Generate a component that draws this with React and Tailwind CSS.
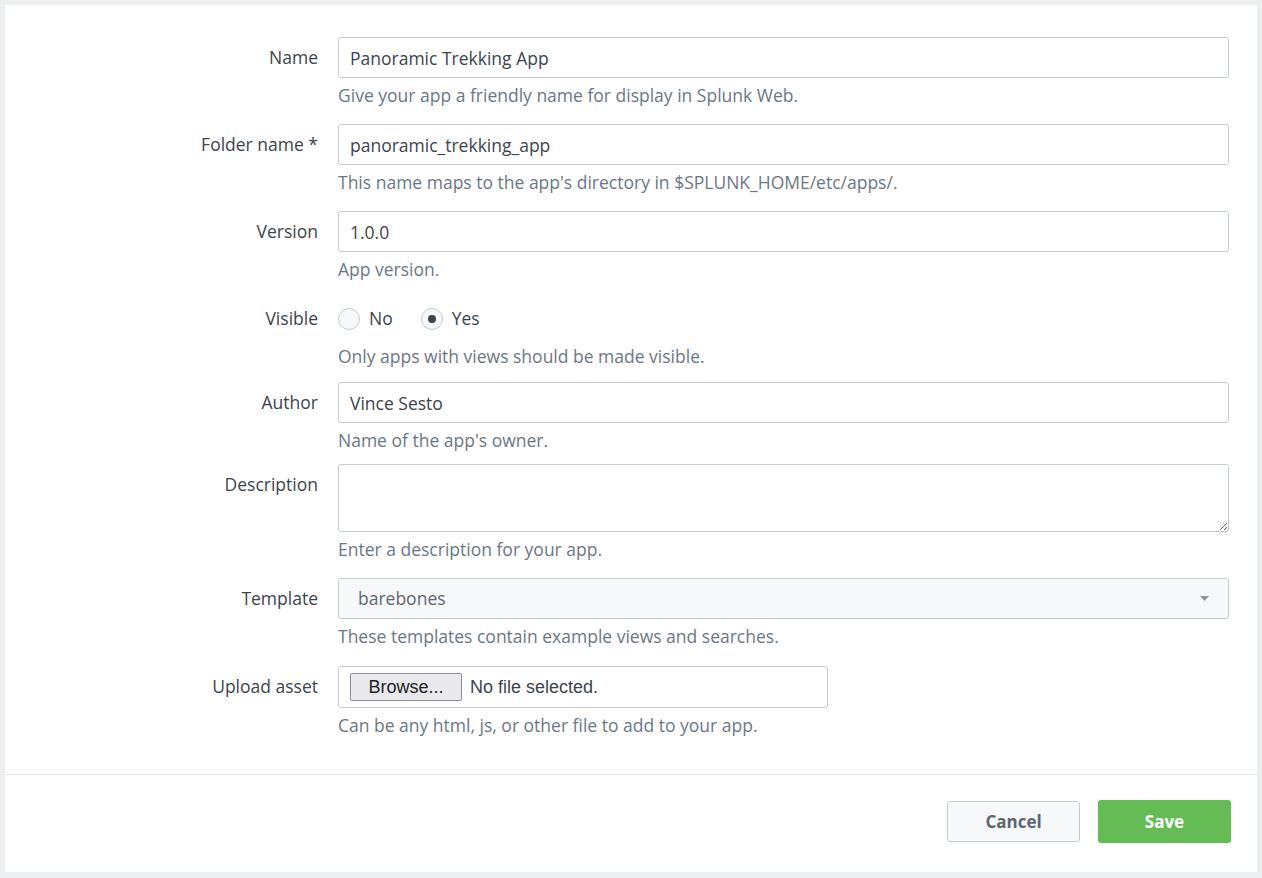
import { useState } from "react";

const inputCls =
    "w-full h-[41px] px-[11px] border border-[#c3cbd4] rounded-[3px] bg-white text-[17.5px] text-[#3c444d] outline-none";

function Row({ label, top, children, help }) {
    return (
        <div className="flex" style={{ marginTop: top }}>
            <div className="w-[333px] pr-[20px] text-right text-[17.5px] text-[#3c444d] leading-[40px] shrink-0">
                {label}
            </div>
            <div className="w-[891px]">
                {children}
                <div className="mt-[5px] leading-[24px] text-[17.5px] text-[#6b7785]">{help}</div>
            </div>
        </div>
    );
}

function Radio({ checked, label, onClick }) {
    return (
        <button type="button" onClick={onClick} className="flex items-center gap-[9px] mr-[28px]">
            <span className="w-[22px] h-[22px] rounded-full border border-[#c3cbd4] bg-[#f7f8fa] flex items-center justify-center">
                {checked && <span className="w-[8px] h-[8px] rounded-full bg-[#3c444d]" />}
            </span>
            <span className="text-[17.5px] text-[#3c444d]">{label}</span>
        </button>
    );
}

export default function App() {
    const [visible, setVisible] = useState(true);

    return (
        <div className="min-h-screen bg-[#eceef0] p-[5px] font-['Open_Sans',sans-serif]">
            <div className="bg-white h-[867px] flex flex-col">
                <div className="pt-[32px] h-[770px] border-b border-[#e1e6eb]">
                    <Row label="Name" top={0} help="Give your app a friendly name for display in Splunk Web.">
                        <input className={inputCls} defaultValue="Panoramic Trekking App" />
                    </Row>
                    <Row label="Folder name *" top={17} help="This name maps to the app's directory in $SPLUNK_HOME/etc/apps/.">
                        <input className={inputCls} defaultValue="panoramic_trekking_app" />
                    </Row>
                    <Row label="Version" top={17} help="App version.">
                        <input className={inputCls} defaultValue="1.0.0" />
                    </Row>
                    <Row label="Visible" top={17} help="Only apps with views should be made visible.">
                        <div className="h-[41px] flex items-center">
                            <Radio checked={!visible} label="No" onClick={() => setVisible(false)} />
                            <Radio checked={visible} label="Yes" onClick={() => setVisible(true)} />
                        </div>
                    </Row>
                    <Row label="Author" top={14} help="Name of the app's owner.">
                        <input className={inputCls} defaultValue="Vince Sesto" />
                    </Row>
                    <Row label="Description" top={12} help="Enter a description for your app.">
                        <textarea className="w-full h-[68px] block px-[11px] py-[8px] border border-[#c3cbd4] rounded-[3px] bg-white text-[17.5px] text-[#3c444d] outline-none" />
                    </Row>
                    <Row label="Template" top={17} help="These templates contain example views and searches.">
                        <div className="h-[41px] px-[19px] border border-[#c3cbd4] rounded-[3px] bg-[#f7f8fa] flex items-center justify-between text-[17.5px] text-[#5c6773]">
                            <span>barebones</span>
                            <svg width="9" height="6" viewBox="0 0 9 6">
                                <path d="M0 0h9L4.5 5z" fill="#8b949e" />
                            </svg>
                        </div>
                    </Row>
                    <Row label="Upload asset" top={18} help="Can be any html, js, or other file to add to your app.">
                        <div className="w-[490px] h-[42px] px-[11px] border border-[#c3cbd4] rounded-[3px] bg-white flex items-center gap-[8px] text-[18px] text-[#3c444d]">
                            <span className="h-[28px] w-[112px] flex items-center justify-center bg-[#e9e9ed] border border-[#8f8f9d] rounded-[2px] font-['Liberation_Sans',sans-serif] text-[#222]">
                                Browse...
                            </span>
                            <span className="font-['Liberation_Sans',sans-serif]">No file selected.</span>
                        </div>
                    </Row>
                </div>
                <div className="flex-1 flex items-center justify-end gap-[18px] pr-[26px] pb-[4px]">
                    <button className="w-[133px] h-[41px] border border-[#c3cbd4] rounded-[3px] bg-[#f7f8fa] text-[17px] font-bold text-[#5c6773]">
                        Cancel
                    </button>
                    <button className="w-[133px] h-[43px] rounded-[3px] bg-[#65bc54] text-[17px] font-bold text-white">
                        Save
                    </button>
                </div>
            </div>
        </div>
    );
}
